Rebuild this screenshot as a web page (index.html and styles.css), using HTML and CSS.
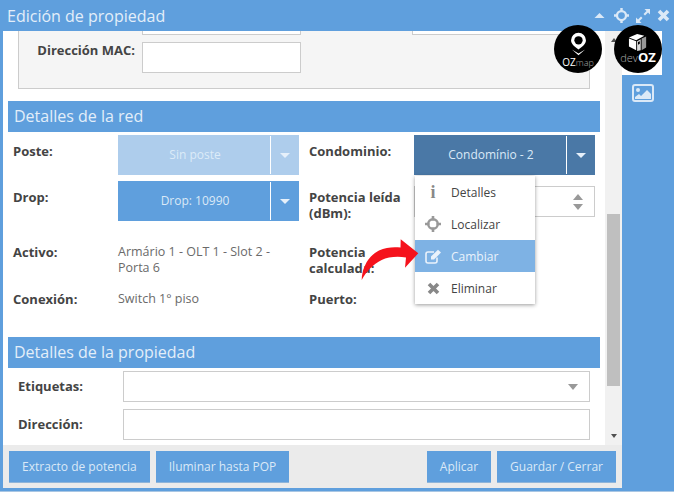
FILE: index.html
```html
<!DOCTYPE html>
<html lang="es">
<head>
<meta charset="utf-8">
<title>Edición de propiedad</title>
<link rel="stylesheet" href="styles.css">
</head>
<body>
<div class="app">
  <header class="titlebar">
    <h1 class="title">Edición de propiedad</h1>
    <div class="controls">
      <svg class="ctl ctl-tri" width="11" height="7" viewBox="0 0 11 7"><path d="M5.500 1 10.500 6H.5z" fill="#dbe9f7"/></svg>
      <svg class="ctl" width="15" height="15" viewBox="0 0 16 16"><circle cx="8" cy="8" r="4.8" fill="none" stroke="#dbe9f7" stroke-width="2.4"/><path d="M8 0v4M8 12v4M0 8h4M12 8h4" stroke="#dbe9f7" stroke-width="2.6"/></svg>
      <svg class="ctl" width="16" height="16" viewBox="0 0 16 16"><path d="M9.5 1H15V6.500L13 4.500 10 7.500 8.500 6 11.500 3zM6.500 15H1V9.500L3 11.500 6 8.500 7.500 10 4.500 13z" fill="#dbe9f7"/></svg>
      <svg class="ctl" width="13" height="13" viewBox="0 0 13 13"><path d="M2 2 11 11M11 2 2 11" stroke="#dbe9f7" stroke-width="3.600"/></svg>
    </div>
  </header>
  <div class="mid">
    <div class="panel">
      <div class="scrollarea">
        <div class="content">
          <div class="box">
            <div class="stub-row">
              <div class="stub"></div>
              <div class="stub stub-right"></div>
            </div>
            <div class="mac-row">
              <label class="lbl mac-lbl">Dirección MAC:</label>
              <div class="input mac-input"></div>
            </div>
          </div>
          <h2 class="section">Detalles de la red</h2>
          <div class="net-grid">
            <div class="lbl">Poste:</div>
            <div class="split split-off"><span class="split-main">Sin poste</span><span class="split-caret"><i class="caret"></i></span></div>
            <div class="lbl">Condominio:</div>
            <div class="split split-dark"><span class="split-main">Condomínio - 2</span><span class="split-caret"><i class="caret"></i></span></div>

            <div class="lbl">Drop:</div>
            <div class="split"><span class="split-main">Drop: 10990</span><span class="split-caret"><i class="caret"></i></span></div>
            <div class="lbl">Potencia leída (dBm):</div>
            <div class="input num-input"><span class="spin"><i class="spin-up"></i><i class="spin-down"></i></span></div>

            <div class="lbl">Activo:</div>
            <div class="val">Armário 1 - OLT 1 - Slot 2 - Porta 6</div>
            <div class="lbl">Potencia calculada:</div>
            <div class="val"></div>

            <div class="lbl">Conexión:</div>
            <div class="val">Switch 1° piso</div>
            <div class="lbl">Puerto:</div>
            <div class="val"></div>
          </div>
          <h2 class="section section-2">Detalles de la propiedad</h2>
          <div class="prop-form">
            <div class="lbl">Etiquetas:</div>
            <div class="input select-input"><i class="sel-caret"></i></div>
            <div class="lbl">Dirección:</div>
            <div class="input"></div>
          </div>
        </div>
        <div class="scrollbar">
          <i class="sb-up"></i>
          <div class="sb-track"><div class="sb-thumb"></div></div>
          <i class="sb-down"></i>
        </div>
      </div>
      <footer class="footer">
        <button class="btn">Extracto de potencia</button>
        <button class="btn">Iluminar hasta POP</button>
        <span class="spacer"></span>
        <button class="btn">Aplicar</button>
        <button class="btn">Guardar / Cerrar</button>
      </footer>
    </div>
    <aside class="sidebar">
      <div class="tab"></div>
      <svg class="pic" width="22" height="18" viewBox="0 0 22 18"><rect x="1" y="1" width="20" height="16" rx="2" fill="none" stroke="#dbe9f7" stroke-width="2"/><circle cx="6" cy="6" r="2" fill="#dbe9f7"/><path d="M3 15v-2l4-3 2 2 6-6 4 4v5z" fill="#dbe9f7"/></svg>
    </aside>
  </div>

  <ul class="menu">
    <li class="mi"><span class="mi-ic mi-info">i</span>Detalles</li>
    <li class="mi"><span class="mi-ic"><svg width="16" height="16" viewBox="0 0 16 16"><circle cx="8" cy="8" r="4.800" fill="none" stroke="#999" stroke-width="2.400"/><path d="M8 0v4.500M8 11.500V16M0 8h4.500M11.500 8H16" stroke="#999" stroke-width="2.600"/></svg></span>Localizar</li>
    <li class="mi mi-on"><span class="mi-ic"><svg width="17" height="15" viewBox="0 0 17 15"><path d="M12 8.500V12a2 2 0 0 1-2 2H3a2 2 0 0 1-2-2V5a2 2 0 0 1 2-2h6" fill="none" stroke="#eaf2fb" stroke-width="1.600"/><path d="M6 7.500 13 .8 16 3.600 9 10.500H6z" fill="#eaf2fb"/></svg></span>Cambiar</li>
    <li class="mi"><span class="mi-ic"><svg width="13" height="13" viewBox="0 0 13 13"><path d="M2 2 11 11M11 2 2 11" stroke="#888" stroke-width="3.600"/></svg></span>Eliminar</li>
  </ul>

  <svg class="arrow" width="60" height="44" viewBox="360 238 60 44"><path d="M361.700 280C362 268 368 256 379 250.500 386 247 394 247 400.500 247.500L400.700 239.300 418.300 253.300 405 267.700 406 257.500C397 256 388 257 381.700 260 373 264 366 272 361.700 280Z" fill="#f5121c"/></svg>

  <div class="logo logo-oz">
    <svg width="17" height="24" viewBox="0 0 20 29"><path d="M10 1a9 9 0 0 1 9 9c0 5-5 8-9 11-4-3-9-6-9-11a9 9 0 0 1 9-9z" fill="#fff"/><circle cx="10" cy="10" r="5" fill="#000"/><path d="M2 21 10 28 18 21 10 26z" fill="#fff"/></svg>
    <span class="logo-text"><span class="oz-b">OZ</span><span class="thin thin-map">map</span></span>
  </div>
  <div class="logo logo-dev">
    <svg width="20" height="19" viewBox="0 0 22 21"><path d="M1 5 10 1 18 3 9 8z" fill="#fff"/><path d="M1 6 9 9V19L1 15z" fill="#fff"/><path d="M10 9 14 7V19L10 20z" fill="#ddd"/><path d="M15 6 20 4V16L15 19z" fill="#999"/><path d="M11 10l2-1v3l-2 1z" fill="#000"/></svg>
    <span class="logo-text logo-text-dev"><span class="thin thin-dev">dev</span><b class="oz-dev">OZ</b></span>
  </div>
</div>
</body>
</html>
```
FILE: styles.css
```css
* { box-sizing: border-box; }
html, body { margin: 0; padding: 0; }
body { font-family: "Open Sans", "Liberation Sans", sans-serif; background: #fff; overflow: hidden; }

.app { position: relative; width: 674px; height: 492px; display: flex; flex-direction: column; background: #5f9fdd; border-bottom: 1px solid #a9c6e3; overflow: hidden; }

.titlebar { height: 31px; flex: none; display: flex; align-items: center; justify-content: space-between; padding: 0 4px 0 7px; background: #5f9fdd; }
.title { margin: 1px 0 0; font-size: 16px; font-weight: 400; color: #e3eef9; line-height: 30px; }
.controls { display: flex; align-items: center; gap: 6px; }
.ctl { display: block; }
.ctl-tri { margin-right: 3px; }

.mid { flex: 1; display: flex; min-height: 0; }
.panel { width: 622px; padding-left: 3px; padding-bottom: 3px; display: flex; flex-direction: column; }
.scrollarea { flex: 1; display: flex; min-height: 0; background: #fff; }
.content { width: 602px; overflow: hidden; }

.box { margin: 0 15px; height: 58px; background: #f5f5f5; border: 1px solid #ccc; border-top: 0; padding-left: 123px; }
.stub-row { display: flex; gap: 111px; height: 4px; }
.stub { width: 159px; height: 4px; background: #fff; border: 1px solid #ccc; border-top: 0; }
.stub-right { flex: 1; border-right: 0; }
.mac-row { position: relative; display: flex; margin-top: 7px; }
.mac-lbl { position: absolute; right: 100%; top: 0; margin-right: 7px; line-height: 31px; white-space: nowrap; }
.mac-input { width: 159px; }

.lbl { font-size: 13px; font-weight: 700; color: #444; line-height: 16px; }
.val { font-size: 12.5px; font-weight: 400; color: #6a6a6a; line-height: 16px; }
.input { position: relative; height: 31px; background: #fff; border: 1px solid #ccc; }

.section { margin: 12px 5px 0; height: 31px; padding-left: 6px; background: #5f9fdd; color: #e3eef9; font-size: 16px; font-weight: 400; line-height: 31px; }
.section-2 { margin-top: 0; }

.net-grid { display: grid; margin: 3px 5px 0; padding-left: 5px; grid-template-columns: 105px 181px 115px 181px; grid-template-rows: 40px 57px 41px 46px; row-gap: 6px; }
.net-grid > :nth-child(4n+3) { margin-left: 10px; width: 95px; }
.net-grid > .lbl { padding-top: 8px; }
.net-grid > .lbl:nth-child(n+9) { padding-top: 0; }
.net-grid > .num-input { margin-top: 5px; }
.net-grid > .val { padding-right: 20px; }

.split { height: 40px; display: flex; background: #5f9fdd; color: #dbe9f7; font-size: 12px; }
.split-main { flex: 1; text-align: center; padding-left: 2px; border-right: 1px solid #fff; margin: 1px 0; line-height: 38px; }
.split-caret { width: 28px; display: flex; align-items: center; justify-content: center; }
.caret { display: block; width: 0; height: 0; border-left: 5px solid transparent; border-right: 5px solid transparent; border-top: 5px solid #e6f0fa; }
.split-off { background: #aecdec; color: #dcebf8; }
.split-dark { background: #4a78a6; }

.spin { position: absolute; right: 11px; top: 7px; display: flex; flex-direction: column; gap: 4px; }
.spin-up, .spin-down { display: block; width: 0; height: 0; border-left: 5px solid transparent; border-right: 5px solid transparent; }
.spin-up { border-bottom: 6px solid #999; }
.spin-down { border-top: 6px solid #999; }

.prop-form { display: grid; margin: 3px 15px 0; grid-template-columns: 105px 467px; row-gap: 7px; }
.prop-form .lbl { line-height: 31px; }
.select-input { display: flex; align-items: center; justify-content: flex-end; padding-right: 11px; }
.sel-caret { display: block; width: 0; height: 0; border-left: 5px solid transparent; border-right: 5px solid transparent; border-top: 6px solid #999; }

.scrollbar { width: 17px; background: #f1f1f1; display: flex; flex-direction: column; align-items: center; }
.sb-up, .sb-down { display: block; width: 0; height: 0; border-left: 3.5px solid transparent; border-right: 3.5px solid transparent; }
.sb-up { border-bottom: 4px solid #505050; margin-top: 7px; }
.sb-down { border-top: 4px solid #505050; margin-bottom: 7px; }
.sb-track { flex: 1; width: 100%; padding: 172px 2px 0; }
.sb-thumb { height: 172px; background: #bfbfbf; }

.footer { height: 43px; flex: none; display: flex; gap: 6px; padding: 6px 6px 5px 6px; background: #ebebeb; align-items: stretch; }
.spacer { flex: 1; }
.btn { font: 400 12px "Open Sans", "Liberation Sans", sans-serif; color: #dbe9f7; background: #5f9fdd; border: 0; border-bottom: 1px solid #8fb5da; padding: 0 13px; white-space: nowrap; }

.sidebar { width: 52px; position: relative; display: flex; flex-direction: column; align-items: flex-start; padding-left: 10px; }
.tab { position: absolute; left: 0; top: 0; width: 40px; height: 44px; background: #fff; }
.pic { display: block; margin-top: 53px; }

.menu { position: absolute; left: 415px; top: 176px; width: 120px; margin: 0; padding: 0; list-style: none; background: #fff; box-shadow: 0 1px 4px rgba(0,0,0,.4); }
.mi { height: 32px; display: flex; align-items: center; font-size: 12px; font-weight: 400; color: #444; }
.mi-ic { width: 36px; flex: none; display: flex; align-items: center; justify-content: center; }
.mi-info { font: 700 18px "Liberation Serif", serif; color: #888; }
.mi-on { background: #7eb2e4; color: #eaf2fb; }

.arrow { position: absolute; left: 360px; top: 238px; }

.logo { position: absolute; top: 25px; width: 48px; height: 48px; border-radius: 50%; background: #000; color: #fff; display: flex; flex-direction: column; align-items: center; }
.logo-oz { left: 554px; padding-top: 7px; }
.logo-oz svg { display: block; }
.logo-dev { left: 614px; padding-top: 8px; }
.logo-dev svg { display: block; }
.logo-text { font-size: 10px; line-height: 10px; white-space: nowrap; margin-top: 1px; }
.logo-text-dev { font-size: 13px; line-height: 13px; margin-top: -1px; }
.thin { font-weight: 300; color: #aaa; }
.thin-map { font-size: 9px; }
.thin-dev { font-size: 11px; }
.oz-dev { font-weight: 700; }
```
